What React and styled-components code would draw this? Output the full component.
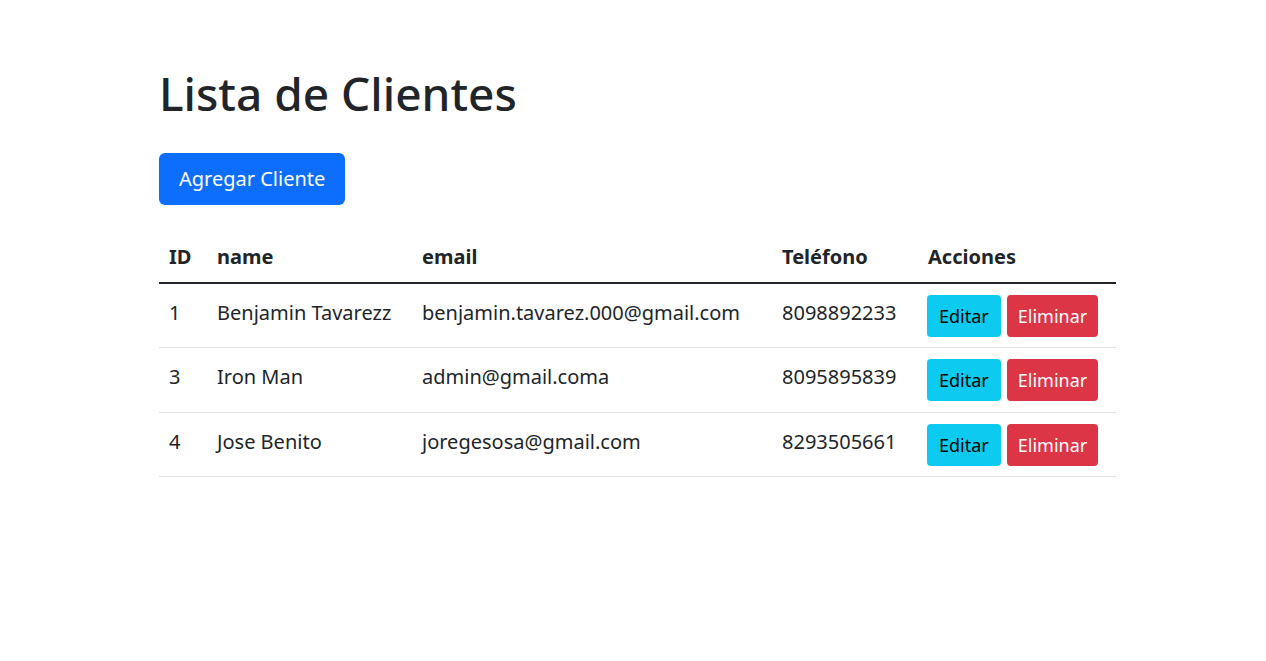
import React from 'react'
import styled, { createGlobalStyle } from 'styled-components'

const GlobalStyle = createGlobalStyle`
  * { box-sizing: border-box; }
  body {
    margin: 0;
    background: #fff;
    color: #212529;
    font-family: "Segoe UI", "Noto Sans", "Open Sans", sans-serif;
    font-size: 20px;
    line-height: 1.5;
  }
`

const Page = styled.div`
  width: 957px;
  margin-left: 159px;
  padding-top: 66px;
`

const Title = styled.h1`
  margin: 0 0 32px;
  font-size: 46px;
  font-weight: 500;
  line-height: 55px;
  color: #212529;
`

const AddButton = styled.button`
  display: inline-block;
  height: 52px;
  padding: 0 20px;
  border: none;
  border-radius: 6px;
  background: #0d6efd;
  color: #fff;
  font-family: inherit;
  font-size: 20px;
  line-height: 52px;
  cursor: pointer;
`

const Table = styled.table`
  width: 100%;
  margin-top: 27px;
  border-collapse: collapse;
  table-layout: fixed;
`

const HeadCell = styled.th`
  width: ${(p) => p.$width}px;
  padding: 10px 10px;
  text-align: left;
  font-weight: 700;
  font-size: 20px;
  line-height: 30px;
  border-bottom: 2px solid #212529;
`

const Row = styled.tr`
  border-bottom: 1px solid #dee2e6;
`

const Cell = styled.td`
  padding: 10px 10px;
  vertical-align: top;
  line-height: 30px;
  height: 64.5px;
  padding-top: ${(p) => (p.$actions ? '11px' : '14px')};
`

const Actions = styled.div`
  display: flex;
  gap: 6px;
  margin-left: -1px;
`

const ActionButton = styled.button`
  height: 42px;
  padding: 0 ${(p) => p.$pad}px;
  border: none;
  border-radius: 4px;
  background: ${(p) => p.$bg};
  color: ${(p) => p.$color};
  font-family: inherit;
  font-size: 18px;
  line-height: 42px;
  cursor: pointer;
`

const clientes = [
  { id: 1, name: 'Benjamin Tavarezz', email: 'benjamin.tavarez.000@gmail.com', telefono: '8098892233' },
  { id: 3, name: 'Iron Man', email: 'admin@gmail.coma', telefono: '8095895839' },
  { id: 4, name: 'Jose Benito', email: 'joregesosa@gmail.com', telefono: '8293505661' },
]

export default function App() {
  return (
    <>
      <GlobalStyle />
      <Page>
        <Title>Lista de Clientes</Title>
        <AddButton>Agregar Cliente</AddButton>
        <Table>
          <thead>
            <tr>
              <HeadCell $width={48}>ID</HeadCell>
              <HeadCell $width={205}>name</HeadCell>
              <HeadCell $width={360}>email</HeadCell>
              <HeadCell $width={146}>Teléfono</HeadCell>
              <HeadCell $width={198}>Acciones</HeadCell>
            </tr>
          </thead>
          <tbody>
            {clientes.map((c) => (
              <Row key={c.id}>
                <Cell>{c.id}</Cell>
                <Cell>{c.name}</Cell>
                <Cell>{c.email}</Cell>
                <Cell>{c.telefono}</Cell>
                <Cell $actions>
                  <Actions>
                    <ActionButton $bg="#0dcaf0" $color="#000" $pad={12}>Editar</ActionButton>
                    <ActionButton $bg="#dc3545" $color="#fff" $pad={11}>Eliminar</ActionButton>
                  </Actions>
                </Cell>
              </Row>
            ))}
          </tbody>
        </Table>
      </Page>
    </>
  )
}
